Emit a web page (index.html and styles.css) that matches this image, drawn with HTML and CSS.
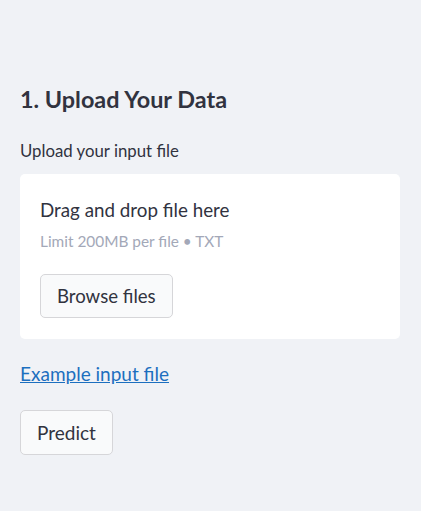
FILE: index.html
```html
<!DOCTYPE html>
<html>
<head>
<meta charset="utf-8">
<link rel="stylesheet" href="styles.css">
</head>
<body>
<div class="page">
  <h2 class="title">1. Upload Your Data</h2>
  <div class="label">Upload your input file</div>
  <div class="dropzone">
    <div class="dz-main">Drag and drop file here</div>
    <div class="dz-sub">Limit 200MB per file • TXT</div>
    <button class="btn browse">Browse files</button>
  </div>
  <a class="link" href="#">Example input file</a>
  <button class="btn predict">Predict</button>
</div>
</body>
</html>
```
FILE: styles.css
```css
html, body {
  margin: 0;
  padding: 0;
  background: #f0f2f6;
  height: 100%;
}
body {
  font-family: Lato, "Liberation Sans", sans-serif;
  color: #31333f;
}
.page {
  padding: 83px 21px 0 20px;
  display: flex;
  flex-direction: column;
  align-items: flex-start;
}
.title {
  margin: 0;
  font-size: 23.4px;
  font-weight: 700;
  line-height: 32px;
}
.label {
  margin-top: 25px;
  font-size: 16.8px;
  line-height: 22px;
}
.dropzone {
  margin-top: 12px;
  align-self: stretch;
  background: #ffffff;
  border-radius: 5px;
  padding: 24px 20px 21px 20px;
  display: flex;
  flex-direction: column;
  align-items: flex-start;
}
.dz-main {
  font-size: 18.8px;
  line-height: 24px;
}
.dz-sub {
  margin-top: 9px;
  font-size: 15.4px;
  line-height: 20px;
  color: #a3a8b8;
}
.btn {
  font-family: inherit;
  color: #31333f;
  background: #f9fafb;
  border: 1px solid #d6d6d9;
  border-radius: 5px;
  cursor: pointer;
}
.browse {
  margin-top: 23px;
  height: 44px;
  padding: 0 16px;
  font-size: 18.6px;
}
.link {
  margin-top: 23px;
  font-size: 19px;
  line-height: 24px;
  color: #1c6fbf;
  text-decoration: underline;
}
.predict {
  margin-top: 24px;
  height: 45px;
  padding: 0 16px;
  font-size: 19px;
}
```
